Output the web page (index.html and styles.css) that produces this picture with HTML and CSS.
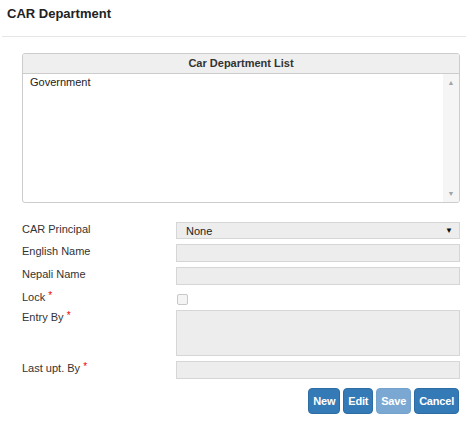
FILE: index.html
```html
<!DOCTYPE html>
<html>
<head>
<meta charset="utf-8">
<link rel="stylesheet" href="styles.css">
</head>
<body>
<div class="page-title">CAR Department</div>
<div class="main">
  <div class="list-box">
    <div class="list-head">Car Department List</div>
    <div class="list-body">
      <div class="list-items">
        <div class="list-item">Government</div>
      </div>
      <div class="scrollbar">
        <span class="arrow">&#9650;</span>
        <span class="arrow">&#9660;</span>
      </div>
    </div>
  </div>

  <div class="form">
    <div class="label">CAR Principal</div>
    <div class="field select"><span>None</span><span class="caret">&#9660;</span></div>

    <div class="label">English Name</div>
    <div class="field input"></div>

    <div class="label">Nepali Name</div>
    <div class="field input"></div>

    <div class="label">Lock <span class="req">*</span></div>
    <div class="check-row"><span class="checkbox"></span></div>

    <div class="label">Entry By <span class="req">*</span></div>
    <div class="field textarea"></div>

    <div class="label">Last upt. By <span class="req">*</span></div>
    <div class="field input"></div>
  </div>

  <div class="actions">
    <button class="btn">New</button>
    <button class="btn">Edit</button>
    <button class="btn disabled">Save</button>
    <button class="btn">Cancel</button>
  </div>
</div>
</body>
</html>
```

FILE: styles.css
```css
html, body {
  margin: 0;
  padding: 0;
  background: #fff;
}
body {
  font-family: "Liberation Sans", Arial, sans-serif;
  font-size: 11px;
  color: #333;
}
.page-title {
  margin: 0 6px 0 2px;
  padding: 4px 5px 13px;
  line-height: 19px;
  font-size: 13px;
  font-weight: bold;
  color: #222;
  border-bottom: 1px solid #e6e6e6;
}
.main {
  padding: 0 12px 0 22px;
}
.list-box {
  margin-top: 16px;
  border: 1px solid #cccccc;
  border-radius: 3px;
  height: 148px;
  display: flex;
  flex-direction: column;
  overflow: hidden;
}
.list-head {
  height: 19px;
  line-height: 19px;
  background: #efefef;
  border-bottom: 1px solid #cccccc;
  text-align: center;
  font-weight: bold;
  color: #333;
}
.list-body {
  flex: 1;
  display: flex;
}
.list-items {
  flex: 1;
}
.list-item {
  padding: 1px 7px;
  line-height: 14px;
  color: #222;
}
.scrollbar {
  width: 16px;
  background: #f5f5f5;
  display: flex;
  flex-direction: column;
  justify-content: space-between;
  align-items: center;
  padding: 5px 0 4px;
}
.arrow {
  font-size: 7px;
  color: #a3a3a3;
  line-height: 8px;
}
.form {
  margin-top: 19px;
  display: grid;
  grid-template-columns: 154px 1fr;
  row-gap: 5px;
}
.label {
  line-height: 15px;
  color: #333;
}
.req {
  color: #e00;
  font-size: 10px;
  vertical-align: top;
  line-height: 11px;
}
.field {
  box-sizing: border-box;
  background: #ededed;
  border: 1px solid #d6d6d6;
}
.input {
  height: 18px;
}
.select {
  height: 17px;
  display: flex;
  justify-content: space-between;
  align-items: center;
  padding: 0 6px 0 9px;
  color: #222;
  font-size: 11px;
}
.caret {
  font-size: 8px;
  color: #111;
}
.textarea {
  height: 46px;
}
.check-row {
  height: 15px;
  display: flex;
  align-items: center;
}
.checkbox {
  display: block;
  width: 9px;
  height: 9px;
  margin-left: 1px;
  margin-top: 4px;
  border: 1px solid #c8c8c8;
  border-radius: 2px;
  background: #f4f4f4;
}
.actions {
  margin-top: 9px;
  display: flex;
  justify-content: flex-end;
  gap: 3px;
  padding-right: 1px;
}
.btn {
  height: 26px;
  padding: 0 4px;
  font-family: "Liberation Sans", Arial, sans-serif;
  font-size: 11px;
  font-weight: bold;
  letter-spacing: -0.2px;
  color: #fff;
  background: #337ab7;
  border: 1px solid #2e6da4;
  border-radius: 4px;
}
.btn.disabled {
  background: #7aa8d2;
  border-color: #75a2cc;
}
```
